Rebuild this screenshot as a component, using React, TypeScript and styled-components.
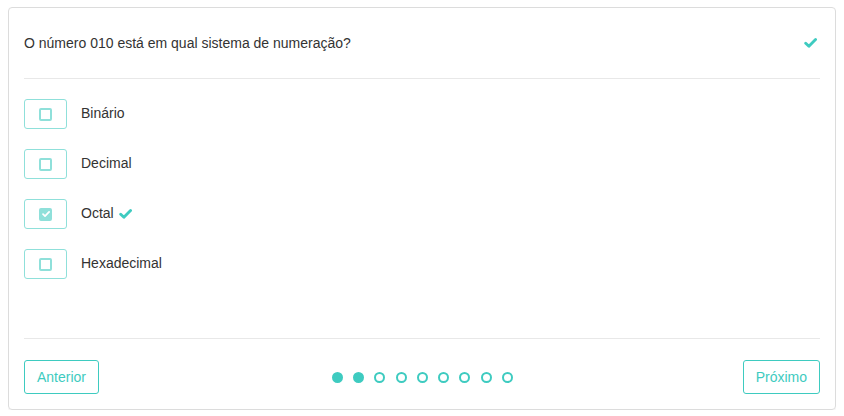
import React, { useState } from "react";
import styled, { createGlobalStyle } from "styled-components";

const teal = "#3ecbc0";
const tealLight = "#8fe0da";

const GlobalStyle = createGlobalStyle`
  body {
    margin: 7px 8px;
    font-family: "Liberation Sans", Arial, sans-serif;
    font-size: 14px;
    color: #333;
    background: #fff;
  }
`;

const options = ["Binário", "Decimal", "Octal", "Hexadecimal"];
const CORRECT = 2;

const CheckMark = ({ size = 12, color = teal }: { size?: number; color?: string }) => (
  <svg width={size} height={size * 0.8} viewBox="0 0 16 13" fill="none">
    <path
      d="M2 6.5 L6 10.3 L14.3 2"
      stroke={color}
      strokeWidth="3.6"
      strokeLinecap="round"
      strokeLinejoin="round"
    />
  </svg>
);

export default function App() {
  const [selected, setSelected] = useState<number>(CORRECT);
  const [page] = useState(1);

  return (
    <>
      <GlobalStyle />
      <Card>
        <Header>
          <Question>O número 010 está em qual sistema de numeração?</Question>
          <CheckMark size={13} />
        </Header>
        <Body>
          {options.map((opt, i) => (
            <OptionRow key={opt} onClick={() => setSelected(i)}>
              <OptionBox>
                <Box $checked={selected === i}>
                  {selected === i && <CheckMark size={8} color="#fff" />}
                </Box>
              </OptionBox>
              <Label>{opt}</Label>
              {selected === i && i === CORRECT && <CheckMark size={13} />}
            </OptionRow>
          ))}
        </Body>
        <Footer>
          <NavButton>Anterior</NavButton>
          <Dots>
            {Array.from({ length: 9 }).map((_, i) => (
              <Dot key={i} $filled={i <= page} />
            ))}
          </Dots>
          <NavButton>Próximo</NavButton>
        </Footer>
      </Card>
    </>
  );
}

//******** STYLES ********//
const Card = styled.div`
  box-sizing: border-box;
  height: 403px;
  border: 1px solid #dcdcdc;
  border-radius: 4px;
  padding: 0 15px;
  display: flex;
  flex-direction: column;
  box-shadow: 0 1px 2px rgba(0, 0, 0, 0.06);
`;

const Header = styled.div`
  height: 70px;
  display: flex;
  align-items: center;
  justify-content: space-between;
  padding-right: 3px;
  border-bottom: 1px solid #e8e8e8;
`;

const Question = styled.p`
  margin: 0;
`;

const Body = styled.div`
  height: 260px;
  padding-top: 20px;
  box-sizing: border-box;
  display: flex;
  flex-direction: column;
  gap: 20px;
  border-bottom: 1px solid #e8e8e8;
`;

const OptionRow = styled.div`
  display: flex;
  align-items: center;
  gap: 5px;
  cursor: pointer;
`;

const OptionBox = styled.div`
  box-sizing: border-box;
  width: 43px;
  height: 30px;
  border: 1px solid ${tealLight};
  border-radius: 3px;
  display: flex;
  align-items: center;
  justify-content: center;
  margin-right: 9px;
`;

const Box = styled.div<{ $checked: boolean }>`
  box-sizing: border-box;
  width: 13px;
  height: 13px;
  border-radius: 2px;
  border: 2px solid ${tealLight};
  background: ${(p) => (p.$checked ? tealLight : "#fff")};
  display: flex;
  align-items: center;
  justify-content: center;
`;

const Label = styled.span`
  line-height: 16px;
  margin-top: -2px;
`;

const Footer = styled.div`
  flex: 1;
  display: flex;
  align-items: flex-start;
  justify-content: space-between;
  padding-top: 21px;
`;

const NavButton = styled.button`
  font-family: "Liberation Sans", Arial, sans-serif;
  font-size: 14px;
  color: ${teal};
  background: #fff;
  border: 1px solid ${teal};
  border-radius: 3px;
  height: 34px;
  padding: 0 12px;
  cursor: pointer;
`;

const Dots = styled.div`
  display: flex;
  gap: 10.3px;
  align-items: center;
  height: 34px;
  margin-left: 3px;
`;

const Dot = styled.span<{ $filled: boolean }>`
  box-sizing: border-box;
  width: 11px;
  height: 11px;
  border-radius: 50%;
  border: 2px solid ${teal};
  background: ${(p) => (p.$filled ? teal : "transparent")};
`;
